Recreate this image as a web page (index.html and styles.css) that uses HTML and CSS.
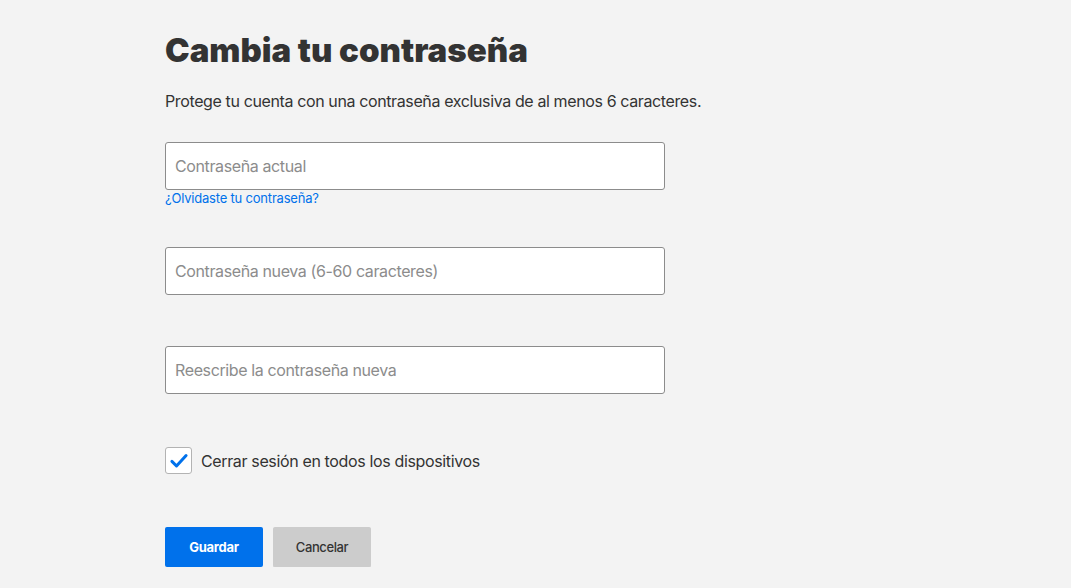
FILE: index.html
```html
<!DOCTYPE html>
<html lang="es">
<head>
<meta charset="utf-8">
<title>Cambia tu contraseña</title>
<link rel="stylesheet" href="styles.css">
</head>
<body>
<main class="page">
  <h1 class="title">Cambia tu contraseña</h1>
  <p class="lead">Protege tu cuenta con una contraseña exclusiva de al menos 6 caracteres.</p>
  <form class="form">
    <div class="field field-first">
      <input class="input" type="password" placeholder="Contraseña actual">
      <a class="forgot" href="#">¿Olvidaste tu contraseña?</a>
    </div>
    <div class="field field-second">
      <input class="input" type="password" placeholder="Contraseña nueva (6-60 caracteres)">
    </div>
    <div class="field field-third">
      <input class="input" type="password" placeholder="Reescribe la contraseña nueva">
    </div>
    <label class="check">
      <span class="box">
        <svg viewBox="0 0 24 24" width="20" height="20"><path d="M3.5 12.5 L9 18 L20.5 5.5" fill="none" stroke="#0071eb" stroke-width="3.6" stroke-linecap="round" stroke-linejoin="round"/></svg>
      </span>
      <span class="check-label">Cerrar sesión en todos los dispositivos</span>
    </label>
    <div class="actions">
      <button type="button" class="btn btn-primary">Guardar</button>
      <button type="button" class="btn btn-secondary">Cancelar</button>
    </div>
  </form>
</main>
</body>
</html>
```
FILE: styles.css
```css
html, body {
  margin: 0;
  padding: 0;
  background: #f3f3f3;
}
body {
  font-family: Inter, "Noto Sans", "Liberation Sans", sans-serif;
  color: #333;
}
.page {
  padding: 30px 0 0 165px;
}
.title {
  margin: 0;
  font-size: 33px;
  line-height: 40px;
  font-weight: 900;
  color: #333;
  letter-spacing: 0;
}
.lead {
  margin: 19px 0 0;
  font-size: 16px;
  line-height: 24px;
  color: #333;
  letter-spacing: -0.38px;
}
.form {
  margin-top: 29px;
  display: flex;
  flex-direction: column;
}
.field {
  display: flex;
  flex-direction: column;
  width: 500px;
}
.field-first { height: 105px; }
.field-second { height: 99px; }
.field-third { height: 101px; }
.input {
  box-sizing: border-box;
  width: 500px;
  height: 48px;
  border: 1px solid #8c8c8c;
  border-radius: 3px;
  background: #fff;
  padding: 0 9px;
  font-family: inherit;
  font-size: 16px;
  letter-spacing: -0.38px;
  color: #333;
  outline: none;
}
.input::placeholder {
  color: #8c8c8c;
}
.forgot {
  font-size: 13px;
  line-height: 16px;
  letter-spacing: -0.2px;
  color: #0071eb;
  text-decoration: none;
}
.check {
  display: flex;
  align-items: center;
  gap: 9px;
  height: 27px;
}
.box {
  box-sizing: border-box;
  width: 27px;
  height: 27px;
  border: 1px solid #b3b3b3;
  border-radius: 3px;
  background: #fff;
  display: flex;
  align-items: center;
  justify-content: center;
}
.check-label {
  font-size: 16px;
  letter-spacing: -0.36px;
  color: #333;
}
.actions {
  margin-top: 53px;
  display: flex;
  gap: 10px;
}
.btn {
  width: 98px;
  height: 40px;
  border: none;
  border-radius: 2px;
  font-family: inherit;
  font-size: 13px;
}
.btn-primary {
  background: #0071eb;
  color: #fff;
  font-weight: 700;
  letter-spacing: -0.3px;
}
.btn-secondary {
  background: #ccc;
  color: #333;
  font-weight: 500;
  letter-spacing: -0.4px;
  box-shadow: 0 1px 0 rgba(0,0,0,0.1);
}
```
